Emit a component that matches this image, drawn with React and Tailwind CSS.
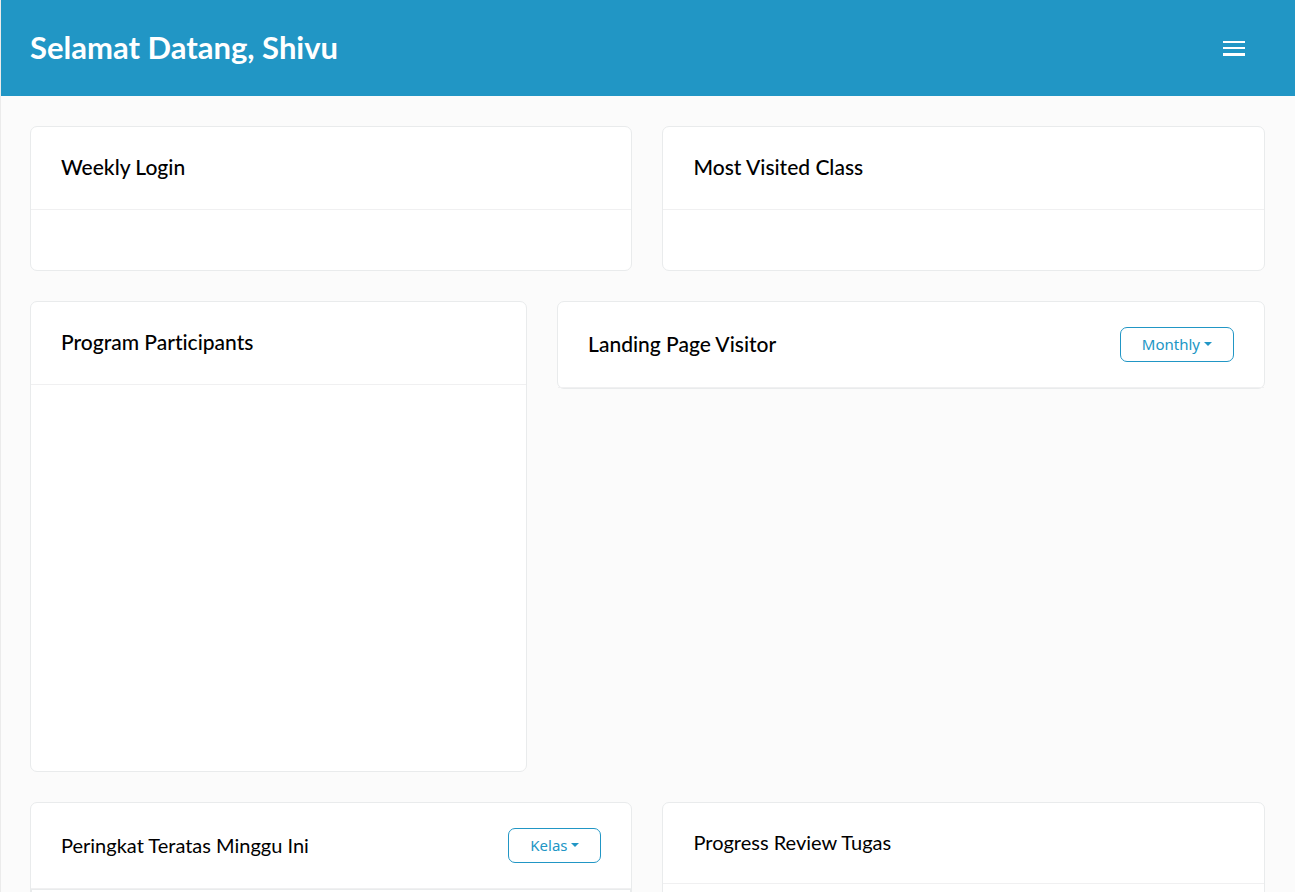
import React from "react";

function Card({ title, action, className = "", light = false, children }) {
  return (
    <section className={`rounded-[7px] border border-[#e9ebec] bg-white ${className}`}>
      <header
        className={`flex items-center justify-between border-b border-[#f0f0f1] px-[30px] ${
          action || light ? "py-[25px]" : "py-[26px]"
        }`}
      >
        <h2
          className={`pb-0.5 leading-7 text-black ${
            light ? "text-[20px] font-normal" : "text-[21px] font-medium"
          }`}
        >
          {title}
        </h2>
        {action}
      </header>
      {children}
    </section>
  );
}

function DropdownButton({ children }) {
  return (
    <button
      type="button"
      aria-haspopup="menu"
      className="flex h-[35px] items-center gap-1 rounded-[7px] border border-[#2196c5] px-[21px] pb-0.5 font-['Noto_Sans',sans-serif] text-[15px] leading-5 text-[#2196c5]"
    >
      {children}
      <svg className="h-1 w-2" viewBox="0 0 8 4" fill="currentColor" aria-hidden="true">
        <path d="M0 0h8L4 4z" />
      </svg>
    </button>
  );
}

export default function App() {
  return (
    <div className="min-h-screen border-l border-[#ebebeb] bg-[#fbfbfb] font-['Lato',sans-serif] [font-variant-ligatures:none]">
      <header className="flex h-24 items-center justify-between bg-[#2196c5] pr-[50px] pl-[29px]">
        <h1 className="pb-0.5 text-[31px] leading-10 font-bold text-white">Selamat Datang, Shivu</h1>
        <button type="button" aria-label="Menu" className="text-white">
          <svg className="h-[15px] w-[22px]" viewBox="0 0 22 15" fill="currentColor" aria-hidden="true">
            <path d="M0 0h22v2H0zM0 6h22v2H0zM0 12h22v3H0z" />
          </svg>
        </button>
      </header>
      <main className="grid grid-cols-12 items-start gap-[30px] py-[30px] pr-[30px] pl-[29px]">
        <Card title="Weekly Login" className="col-span-6">
          <div className="p-[30px]" />
        </Card>
        <Card title="Most Visited Class" className="col-span-6">
          <div className="p-[30px]" />
        </Card>
        <Card title="Program Participants" className="col-span-5">
          <div className="h-[386px]" />
        </Card>
        <Card
          title="Landing Page Visitor"
          className="col-span-7"
          action={<DropdownButton>Monthly</DropdownButton>}
        />
        <Card
          title="Peringkat Teratas Minggu Ini"
          light
          className="col-span-6"
          action={<DropdownButton>Kelas</DropdownButton>}
        >
          <div className="border border-[#e9ebec] p-[30px]" />
        </Card>
        <Card title="Progress Review Tugas" light className="col-span-6">
          <div className="p-[30px]" />
        </Card>
      </main>
    </div>
  );
}
